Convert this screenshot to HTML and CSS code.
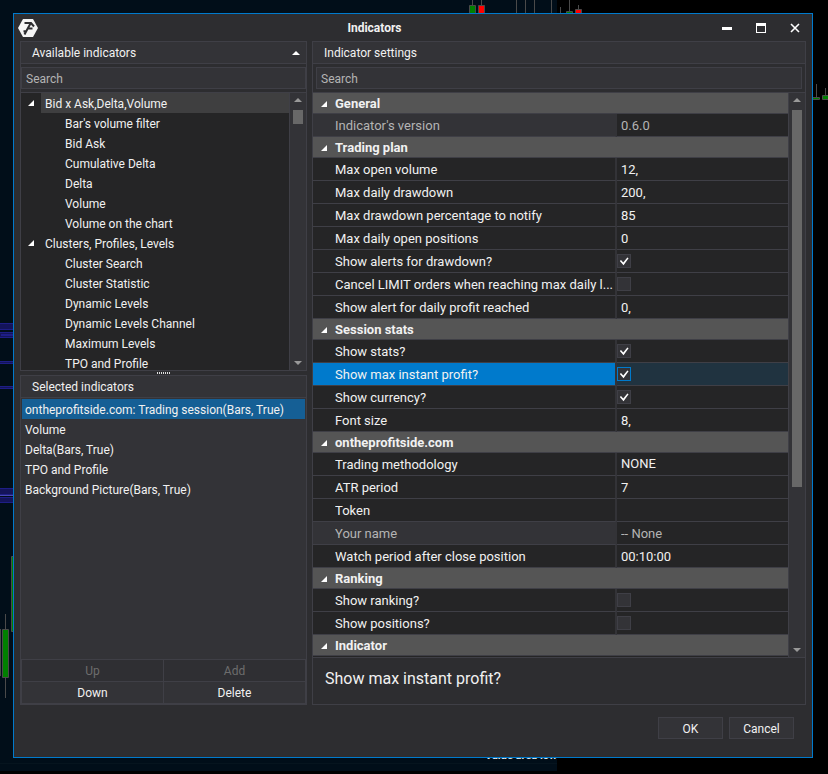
FILE: index.html
```html
<!DOCTYPE html>
<html lang="en">
<head>
<meta charset="utf-8">
<title>Indicators</title>
<link rel="stylesheet" href="styles.css">
</head>
<body>
<div class="chart" aria-hidden="true">
  <div class="chart-area"></div>
  <svg class="chart-marks" width="828" height="774">
    <g fill="#14145a" stroke="#1e1e86">
      <rect x="-2" y="323.500" width="20" height="6"/>
      <rect x="-2" y="332.500" width="20" height="5"/>
      <rect x="1.500" y="334.500" width="20" height="1" fill="#010e19"/>
      <rect x="-2" y="361.500" width="20" height="2"/>
      <rect x="-2" y="386.500" width="20" height="2"/>
      <rect x="-2" y="488.500" width="20" height="6"/>
      <rect x="-2" y="497.500" width="20" height="5"/>
      <path stroke="#4a4ab0" d="M0 495.500h14"/>
    </g>
    <g stroke="#4a4a4a">
      <path d="M472.500 0v6M481.500 0v6M516.500 0v14M525.500 0v14M534.500 0v14M551.500 0v14M560.500 7v7M569.500 0v12M578.500 5v5M816.500 84v14M825.500 88v8M5.500 614v84"/>
      <path fill="#008000" d="M469.500 5.500h6v9h-6zM566.500 11.500h6v4h-6zM808.500 97.500h11v2h-11zM822.500 95.500h6v4h-6zM11.500 556.500h6v75h-6zM2.500 629.500h6v48h-6z"/>
      <path fill="#f00" d="M478.500 5.500h6v9h-6zM575.500 9.500h6v5h-6z"/>
      <path d="M.5 629v47"/>
    </g>
  </svg>
  <span class="chart-label">Value area low</span>
</div>

<main class="window">
  <header class="titlebar">
    <svg class="logo" width="20" height="18" viewBox="0 0 20 18">
      <path fill="#f4f4f4" d="M5 0h10l5 9-5 9H5L0 9z"/>
      <path fill="none" stroke="#2d2d30" stroke-width="2" d="M6.500 4H13l3 3.500M12.500 4.500 10 9l-3.500 6.500M10 9.500h4.500M5.500 12.500 8 12"/>
    </svg>
    <h1>Indicators</h1>
    <div class="controls">
      <button type="button" aria-label="Minimize"><svg width="12" height="12"><path fill="#fff" d="M1 5h10v3H1z"/></svg></button>
      <button type="button" aria-label="Maximize"><svg width="12" height="12"><path fill="#fff" fill-rule="evenodd" d="M1 1h10v10H1zM2 4v6h8V4z"/></svg></button>
      <button type="button" aria-label="Close"><svg width="12" height="12"><path fill="none" stroke="#fff" stroke-width="1.600" d="m2 2 8 8m0-8-8 8"/></svg></button>
    </div>
  </header>

  <div class="panels">
    <div class="left">
      <section class="panel available">
        <h2 class="panel-title">Available indicators <svg width="8" height="4"><path fill="#fff" d="M0 4 4 0l4 4z"/></svg></h2>
        <div class="search"><input type="text" placeholder="Search" aria-label="Search indicators"></div>
        <div class="scroll">
          <ul class="tree">
            <li><div class="branch active"><button type="button" aria-label="Collapse Bid x Ask,Delta,Volume"></button><span>Bid x Ask,Delta,Volume</span></div>
              <ul>
                <li>Bar's volume filter</li>
                <li>Bid Ask</li>
                <li>Cumulative Delta</li>
                <li>Delta</li>
                <li>Volume</li>
                <li>Volume on the chart</li>
              </ul>
            </li>
            <li><div class="branch"><button type="button" aria-label="Collapse Clusters, Profiles, Levels"></button><span>Clusters, Profiles, Levels</span></div>
              <ul>
                <li>Cluster Search</li>
                <li>Cluster Statistic</li>
                <li>Dynamic Levels</li>
                <li>Dynamic Levels Channel</li>
                <li>Maximum Levels</li>
                <li>TPO and Profile</li>
              </ul>
            </li>
          </ul>
          <div class="bar"><i class="up"></i><i class="thumb short"></i><i class="down"></i></div>
        </div>
      </section>
      <div class="splitter"></div>
      <section class="panel selected">
        <h2 class="panel-title">Selected indicators</h2>
        <ul class="list">
          <li class="current">ontheprofitside.com: Trading session(Bars, True)</li>
          <li>Volume</li>
          <li>Delta(Bars, True)</li>
          <li>TPO and Profile</li>
          <li>Background Picture(Bars, True)</li>
        </ul>
        <div class="actions">
          <button type="button" disabled>Up</button>
          <button type="button" disabled>Add</button>
          <button type="button">Down</button>
          <button type="button">Delete</button>
        </div>
      </section>
    </div>

    <section class="panel settings">
      <h2 class="panel-title">Indicator settings</h2>
      <div class="search"><input type="text" placeholder="Search" aria-label="Search settings"></div>
      <div class="scroll">
        <div class="grid">
          <table>
            <colgroup><col class="name"><col></colgroup>
            <tbody>
              <tr class="group"><th colspan="2">General</th></tr>
              <tr class="readonly"><td><label for="version">Indicator's version</label></td><td><input id="version" type="text" value="0.6.0" readonly></td></tr>
              <tr class="group"><th colspan="2">Trading plan</th></tr>
              <tr><td><label for="volume">Max open volume</label></td><td><input id="volume" type="text" value="12,"></td></tr>
              <tr><td><label for="drawdown">Max daily drawdown</label></td><td><input id="drawdown" type="text" value="200,"></td></tr>
              <tr><td><label for="percent">Max drawdown percentage to notify</label></td><td><input id="percent" type="text" value="85"></td></tr>
              <tr><td><label for="open">Max daily open positions</label></td><td><input id="open" type="text" value="0"></td></tr>
              <tr><td><label for="alerts">Show alerts for drawdown?</label></td><td><input id="alerts" type="checkbox" checked></td></tr>
              <tr><td><label for="cancel">Cancel LIMIT orders when reaching max daily l...</label></td><td><input id="cancel" type="checkbox"></td></tr>
              <tr><td><label for="profit">Show alert for daily profit reached</label></td><td><input id="profit" type="text" value="0,"></td></tr>
              <tr class="group"><th colspan="2">Session stats</th></tr>
              <tr><td><label for="stats">Show stats?</label></td><td><input id="stats" type="checkbox" checked></td></tr>
              <tr class="current"><td><label for="instant">Show max instant profit?</label></td><td><input id="instant" type="checkbox" checked></td></tr>
              <tr><td><label for="currency">Show currency?</label></td><td><input id="currency" type="checkbox" checked></td></tr>
              <tr><td><label for="font">Font size</label></td><td><input id="font" type="text" value="8,"></td></tr>
              <tr class="group"><th colspan="2">ontheprofitside.com</th></tr>
              <tr><td><label for="method">Trading methodology</label></td><td><select id="method"><option>NONE</option></select></td></tr>
              <tr><td><label for="atr">ATR period</label></td><td><input id="atr" type="text" value="7"></td></tr>
              <tr><td><label for="token">Token</label></td><td><input id="token" type="text"></td></tr>
              <tr class="readonly"><td><label for="yourname">Your name</label></td><td><input id="yourname" type="text" value="-- None" readonly></td></tr>
              <tr><td><label for="watch">Watch period after close position</label></td><td><input id="watch" type="text" value="00:10:00"></td></tr>
              <tr class="group"><th colspan="2">Ranking</th></tr>
              <tr><td><label for="ranking">Show ranking?</label></td><td><input id="ranking" type="checkbox"></td></tr>
              <tr><td><label for="positions">Show positions?</label></td><td><input id="positions" type="checkbox"></td></tr>
              <tr class="group"><th colspan="2">Indicator</th></tr>
            </tbody>
          </table>
        </div>
        <div class="bar"><i class="up"></i><i class="thumb long"></i><i class="down"></i></div>
      </div>
      <p class="hint">Show max instant profit?</p>
    </section>
  </div>

  <footer class="footer">
    <button type="button">OK</button>
    <button type="button">Cancel</button>
  </footer>
</main>
</body>
</html>
```
FILE: styles.css
```css
:root {
  --surface: #2d2d30;
  --raised: #333337;
  --line: #3f3f46;
  --dark: #252526;
  --text: #f1f1f1;
  --muted: #b4b4b4;
}

* { box-sizing: border-box; margin: 0; padding: 0; }

body {
  display: flex;
  height: 100vh;
  padding: 13px 15px 16px 13px;
  background: #000;
  color: var(--text);
  font: 12px/22px Roboto, "Open Sans", sans-serif;
  overflow: hidden;
}

button, input, select { font: inherit; color: inherit; }
ul { list-style: none; }

/* Chart behind the dialog */
.chart { position: absolute; inset: 0; overflow: hidden; }
.chart-area {
  width: 557px;
  height: 771px;
  background: linear-gradient(#06141e, #06141e) 0 763px / 100% 1px no-repeat, #010e19;
}
.chart-marks { position: absolute; left: 0; top: 0; }
.chart-label {
  position: absolute;
  left: 485px;
  top: 747px;
  font-size: 11px;
  font-weight: 700;
  line-height: 18px;
  color: #dfe4e8;
}

.window {
  position: relative;
  display: flex;
  flex: 1;
  flex-direction: column;
  min-width: 0;
  border: 1px solid #007acc;
  background: var(--surface);
}

.titlebar {
  display: flex;
  align-items: center;
  height: 27px;
  padding: 0 5px 0 4px;
}
.titlebar h1 { flex: 1; padding-right: 4px; font-size: 12px; font-weight: 700; text-align: center; }
.logo { display: block; }
.controls { display: flex; gap: 10px; }
.controls button {
  display: grid;
  place-items: center;
  width: 24px;
  height: 24px;
  border: 0;
  background: none;
}

.panels {
  display: grid;
  grid-template-columns: 287fr 494fr;
  flex: 1;
  gap: 5px;
  min-height: 0;
  padding: 0 6px;
}
.left { display: flex; flex-direction: column; min-width: 0; min-height: 0; }
.panel {
  display: flex;
  flex-direction: column;
  min-width: 0;
  min-height: 0;
  border: 1px solid var(--line);
}
.available { flex: 330; }
.selected { flex: 330; background: var(--raised); }

.panel-title {
  display: flex;
  align-items: center;
  justify-content: space-between;
  flex: none;
  height: 22px;
  padding: 0 6px 0 11px;
  border-bottom: 1px solid var(--line);
  background: var(--raised);
  font-size: 12px;
  font-weight: 400;
}

.search { flex: none; height: 29px; padding: 3px 0; border-bottom: 1px solid var(--line); }
.search input {
  display: block;
  width: 100%;
  height: 22px;
  padding: 2px 4px 0;
  border: 1px solid var(--line);
  background: var(--raised);
}
.search input::placeholder { color: var(--muted); opacity: 1; }
.settings .search { padding: 3px; }

.scroll { display: flex; flex: 1; min-height: 0; overflow: hidden; }
.bar {
  display: flex;
  flex: none;
  flex-direction: column;
  align-items: center;
  width: 17px;
  padding: 5px 0;
  border-left: 1px solid var(--line);
  background: var(--raised);
}
.bar .up, .bar .down { width: 8px; height: 4px; background: #999; }
.bar .up { margin-bottom: 8px; clip-path: polygon(50% 0, 100% 100%, 0 100%); }
.bar .down { margin-top: auto; clip-path: polygon(0 0, 100% 0, 50% 100%); }
.thumb { width: 10px; background: #686868; }
.short { height: 14px; }
.long { height: 68%; }

.tree { flex: 1; min-width: 0; background: var(--dark); white-space: nowrap; }
.branch { display: flex; height: 20px; }
.branch button { width: 20px; border: 0; background: none; }
.branch button::before, .group th::before {
  content: "";
  display: block;
  width: 6px;
  height: 6px;
  background: #fff;
  clip-path: polygon(100% 0, 100% 100%, 0 100%);
}
.branch button::before { margin: 0 7px; }
.branch span { flex: 1; padding-left: 4px; }
.branch.active span { background: #3f3f40; }
.tree ul li { height: 20px; padding-left: 44px; }

.splitter {
  flex: none;
  width: 14px;
  height: 4px;
  margin: 0 auto;
  background: repeating-linear-gradient(90deg, #ddd 0 1px, transparent 1px 2px) 0 1px / 100% 2px no-repeat;
}

.list { flex: 1; padding: 1px; overflow: hidden; white-space: nowrap; }
.list li { height: 20px; padding-left: 3px; }
.list .current { background: #155f95; }
.actions {
  display: grid;
  grid-template-columns: 1fr 1fr;
  flex: none;
  gap: 1px;
  padding: 1px;
  background: var(--line);
}
.actions button { height: 21px; padding-top: 1px; border: 0; background: var(--raised); line-height: 20px; }
.actions button:disabled { background: #2f2f33; color: #6d6d6d; }

.grid { flex: 1; min-width: 0; overflow: hidden; background: var(--dark); font-size: 13px; }
table { width: 100%; table-layout: fixed; border-spacing: 0; }
.name { width: 64%; }
th, td { border-bottom: 1px solid var(--line); }
td { height: 23px; }
td:first-child { padding-left: 22px; border-right: 2px solid #333337; }
td label {
  display: block;
  height: 22px;
  padding-top: 1px;
  overflow: hidden;
  text-overflow: ellipsis;
  white-space: nowrap;
}
td input[type="text"], select {
  display: block;
  width: 100%;
  height: 22px;
  padding: 2px 4px 0;
  border: 0;
  background: none;
  appearance: none;
}
select { padding-top: 0; }
input[type="checkbox"] {
  display: block;
  width: 14px;
  height: 14px;
  border: 1px solid var(--line);
  background: var(--raised);
  appearance: none;
}
input[type="checkbox"]:checked::before {
  content: "";
  display: block;
  width: 12px;
  height: 12px;
  background: #fff;
  clip-path: polygon(15% 50%, 25% 42%, 44% 63%, 78% 20%, 88% 28%, 46% 85%);
}
.group th {
  height: 21px;
  padding: 2px 8px 0;
  background: #555;
  font-weight: 700;
  line-height: 18px;
  text-align: left;
}
.group th::before { display: inline-block; margin: 0 8px 1px 0; }
.readonly { color: var(--muted); }
.readonly td:first-child { background: #333337; }
.current td { background: #203340; }
.current td:first-child { background: #007acc; }
.current input[type="checkbox"] { border-color: #007acc; }

.hint {
  flex: none;
  height: 47px;
  padding: 9px 12px;
  border-top: 1px solid var(--line);
  font-size: 16px;
  line-height: 24px;
}

.footer {
  display: flex;
  flex: none;
  justify-content: flex-end;
  gap: 6px;
  padding: 12px 18px 18px;
}
.footer button {
  width: 65px;
  height: 22px;
  padding-top: 1px;
  border: 1px solid var(--line);
  background: var(--raised);
  line-height: 20px;
}
```
